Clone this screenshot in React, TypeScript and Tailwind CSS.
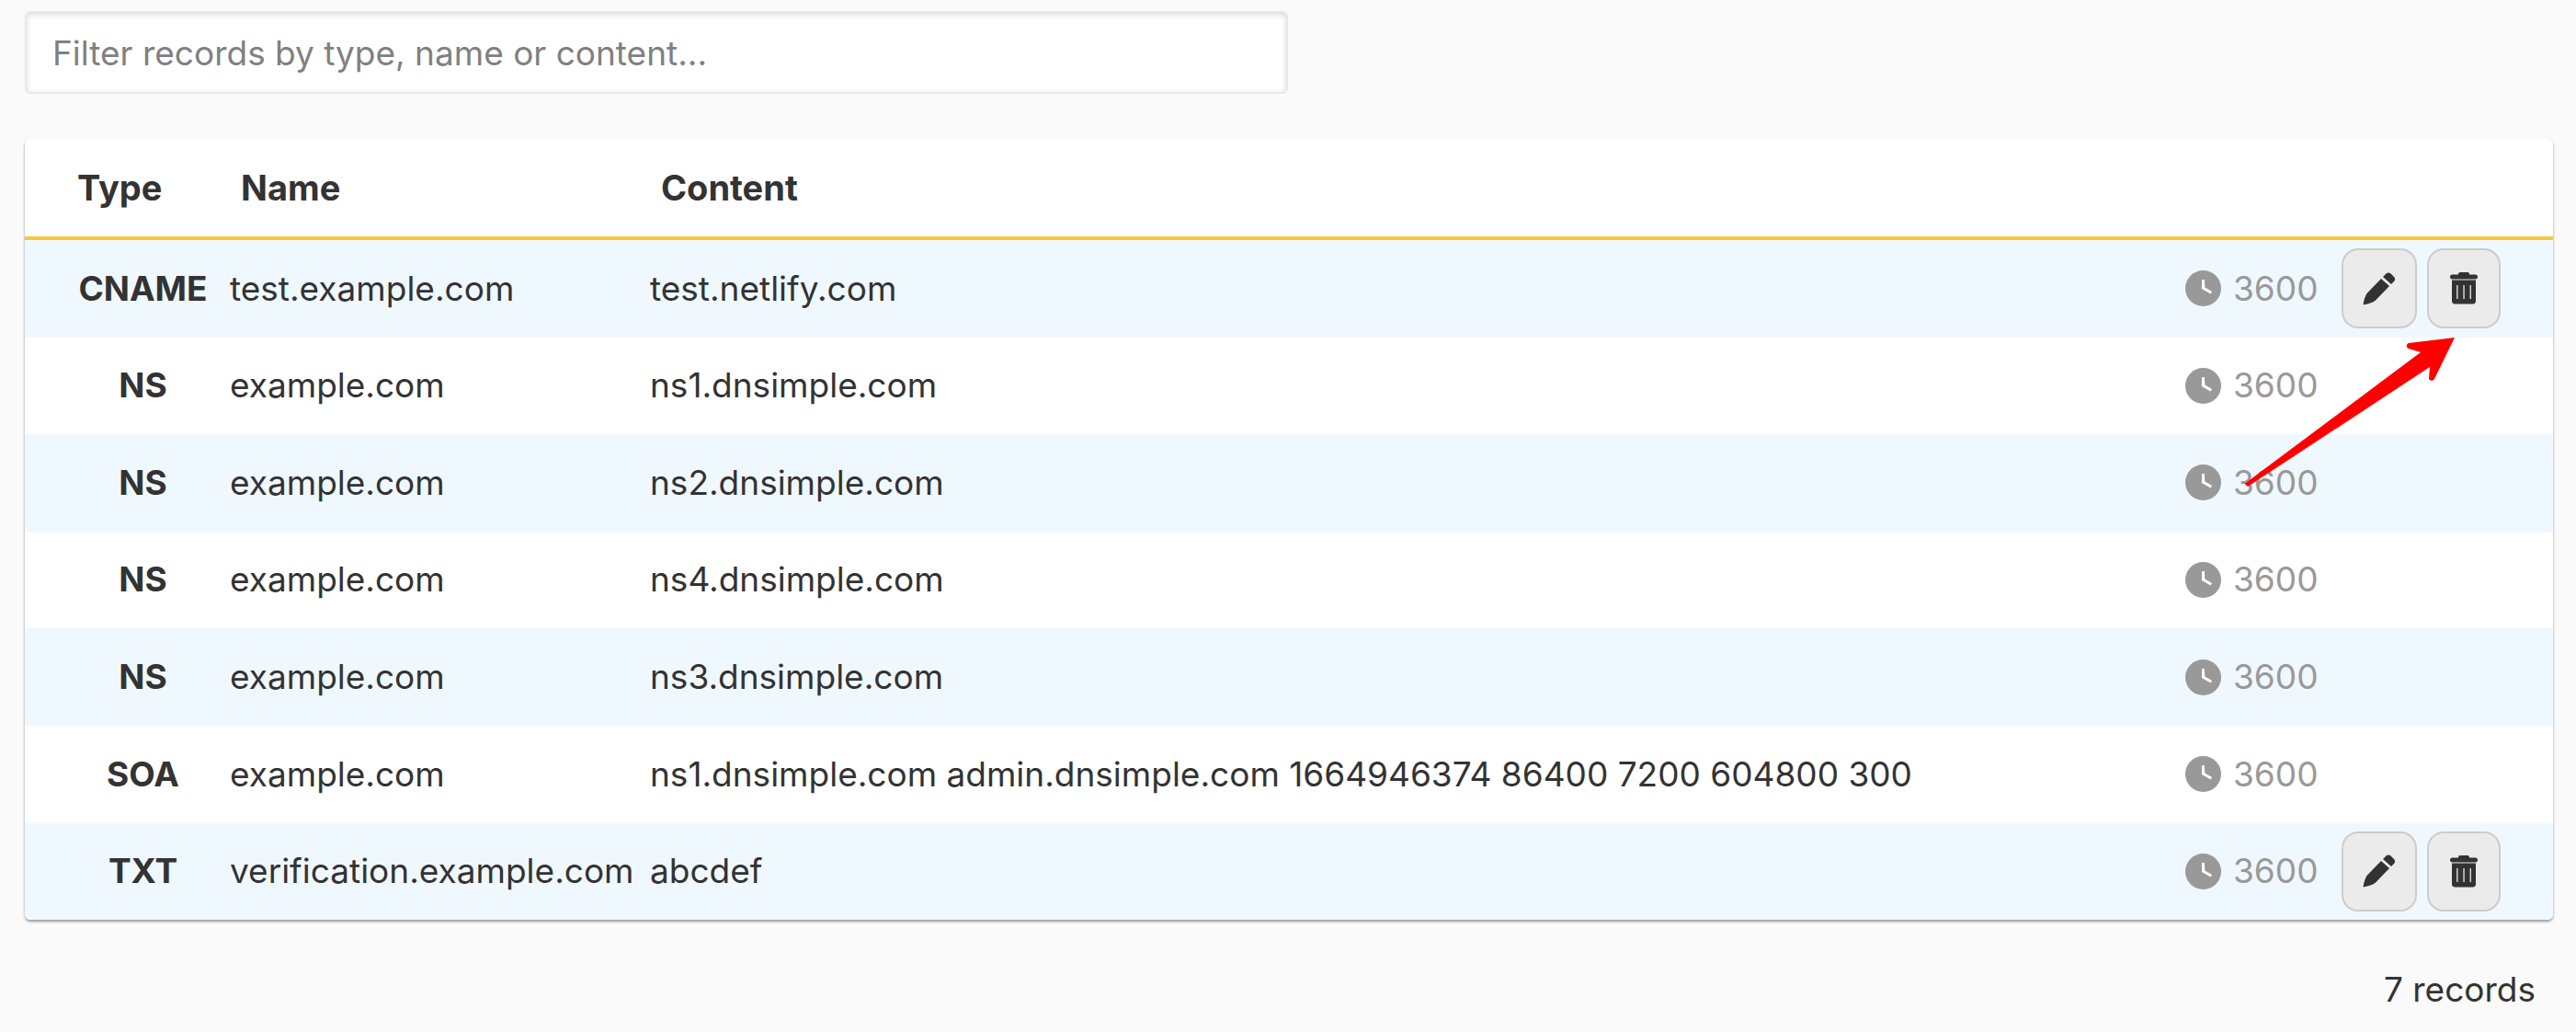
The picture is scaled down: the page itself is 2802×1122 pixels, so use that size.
const records = [
  { type: 'CNAME', name: 'test.example.com', content: 'test.netlify.com', editable: true },
  { type: 'NS', name: 'example.com', content: 'ns1.dnsimple.com', editable: false },
  { type: 'NS', name: 'example.com', content: 'ns2.dnsimple.com', editable: false },
  { type: 'NS', name: 'example.com', content: 'ns4.dnsimple.com', editable: false },
  { type: 'NS', name: 'example.com', content: 'ns3.dnsimple.com', editable: false },
  { type: 'SOA', name: 'example.com', content: 'ns1.dnsimple.com admin.dnsimple.com 1664946374 86400 7200 604800 300', editable: false },
  { type: 'TXT', name: 'verification.example.com', content: 'abcdef', editable: true },
];

const ClockIcon = () => (
  <svg viewBox="0 0 39 39" className="w-[39px] h-[39px] shrink-0">
    <circle cx="19.5" cy="19.5" r="19.5" fill="#999999" />
    <path d="M18.2 10h2.600l.5 8.600 7.800 4.500-1.500 2.400-9.700-5.400z" fill="#ffffff" />
  </svg>
);

const PencilIcon = () => (
  <svg viewBox="0 0 36 36" className="w-9 h-9">
    <path d="M20 7l9 8-15 15.500c-3 2.500-8 4-12.500 4.800C.5 35.500.5 35 .7 34c.8-4 1.800-8 3.800-11z" fill="#333333" />
    <path d="M22 5l3.500-3.500c1.500-1.500 3.500-1.500 5 0l3.500 3.500c1.500 1.500 1.500 3.500 0 5l-3 3z" fill="#333333" />
  </svg>
);

const TrashIcon = () => (
  <svg viewBox="0 0 30 35" className="w-[30px] h-[35px]">
    <rect x="9" y="0" width="12" height="5" rx="2" fill="#333333" />
    <rect x="0" y="2.500" width="30" height="5" rx="2.500" fill="#333333" />
    <path d="M2 8.500h26V31a3.500 3.500 0 0 1-3.500 3.500h-19A3.500 3.500 0 0 1 2 31z" fill="#333333" />
    <rect x="7.200" y="14" width="1.300" height="15" fill="#ebebeb" />
    <rect x="14.400" y="14" width="1.300" height="15" fill="#ebebeb" />
    <rect x="21.600" y="14" width="1.300" height="15" fill="#ebebeb" />
  </svg>
);

export default function App() {
  return (
    <div className="relative min-h-screen bg-[#fafafa] text-[#333333] font-['Inter',Arial,sans-serif] text-[37px] leading-[1.2] antialiased">
      <div className="pt-3 pl-[27px] pr-[25px]">
        <input
          placeholder="Filter records by type, name or content..."
          className="block w-[1374px] h-[90px] px-[28px] bg-white rounded-md border-2 border-[#e8e8e8] shadow-[inset_0_2px_6px_rgba(0,0,0,0.15)] outline-none placeholder:text-[#808080]"
        />

        <div className="mt-[49px] rounded-md overflow-hidden bg-white shadow-[0_2px_3px_rgba(0,0,0,0.4)]">
          <table className="w-full table-fixed border-separate border-spacing-0">
            <colgroup>
              <col className="w-[210px]" />
              <col className="w-[457px]" />
              <col />
              <col className="w-[400px]" />
            </colgroup>
            <thead>
              <tr className="h-[110px] text-left text-[38px]">
                <th className="pl-[57px] pt-[2px] border-b-4 border-[#f8c93c] font-bold">Type</th>
                <th className="pl-[25px] pt-[2px] border-b-4 border-[#f8c93c] font-bold">Name</th>
                <th className="pl-[25px] pt-[2px] border-b-4 border-[#f8c93c] font-bold">Content</th>
                <th className="border-b-4 border-[#f8c93c]" />
              </tr>
            </thead>
            <tbody>
              {records.map((r, i) => (
                <tr key={i} className={i % 2 === 0 ? 'h-[105.6px] bg-[#f0f8ff]' : 'h-[105.6px] bg-white'}>
                  <td className="pl-[57px] pr-[10px] text-center font-bold whitespace-nowrap">{r.type}</td>
                  <td className="pl-[13px] whitespace-nowrap">{r.name}</td>
                  <td className="pl-[13px] whitespace-nowrap">{r.content}</td>
                  <td>
                    <div className="flex items-center">
                      <ClockIcon />
                      <span className="ml-[13px] w-[92px] text-[#999999]">3600</span>
                      {r.editable && (
                        <div className="flex items-center gap-[11px] ml-[26px]">
                          <button className="flex items-center justify-center w-[82px] h-[87px] rounded-[18px] border-2 border-[#cccccc] bg-[#ebebeb]">
                            <PencilIcon />
                          </button>
                          <button className="flex items-center justify-center w-[80px] h-[87px] rounded-[18px] border-2 border-[#cccccc] bg-[#ebebeb]">
                            <TrashIcon />
                          </button>
                        </div>
                      )}
                    </div>
                  </td>
                </tr>
              ))}
            </tbody>
          </table>
        </div>

        <div className="mt-[54px] pr-[19px] text-right">7 records</div>
      </div>

      {/* annotation arrow */}
      <svg viewBox="0 0 250 180" className="absolute left-[2430px] top-[360px] w-[250px] h-[180px]">
        <path
          d="M11.500 166L203 23 190 19c-3-1-3-5 0-6l50-6-22 45c-2 3-6 2-6-1l1-12L15 169z"
          fill="#ff0000"
        />
      </svg>
    </div>
  );
}
